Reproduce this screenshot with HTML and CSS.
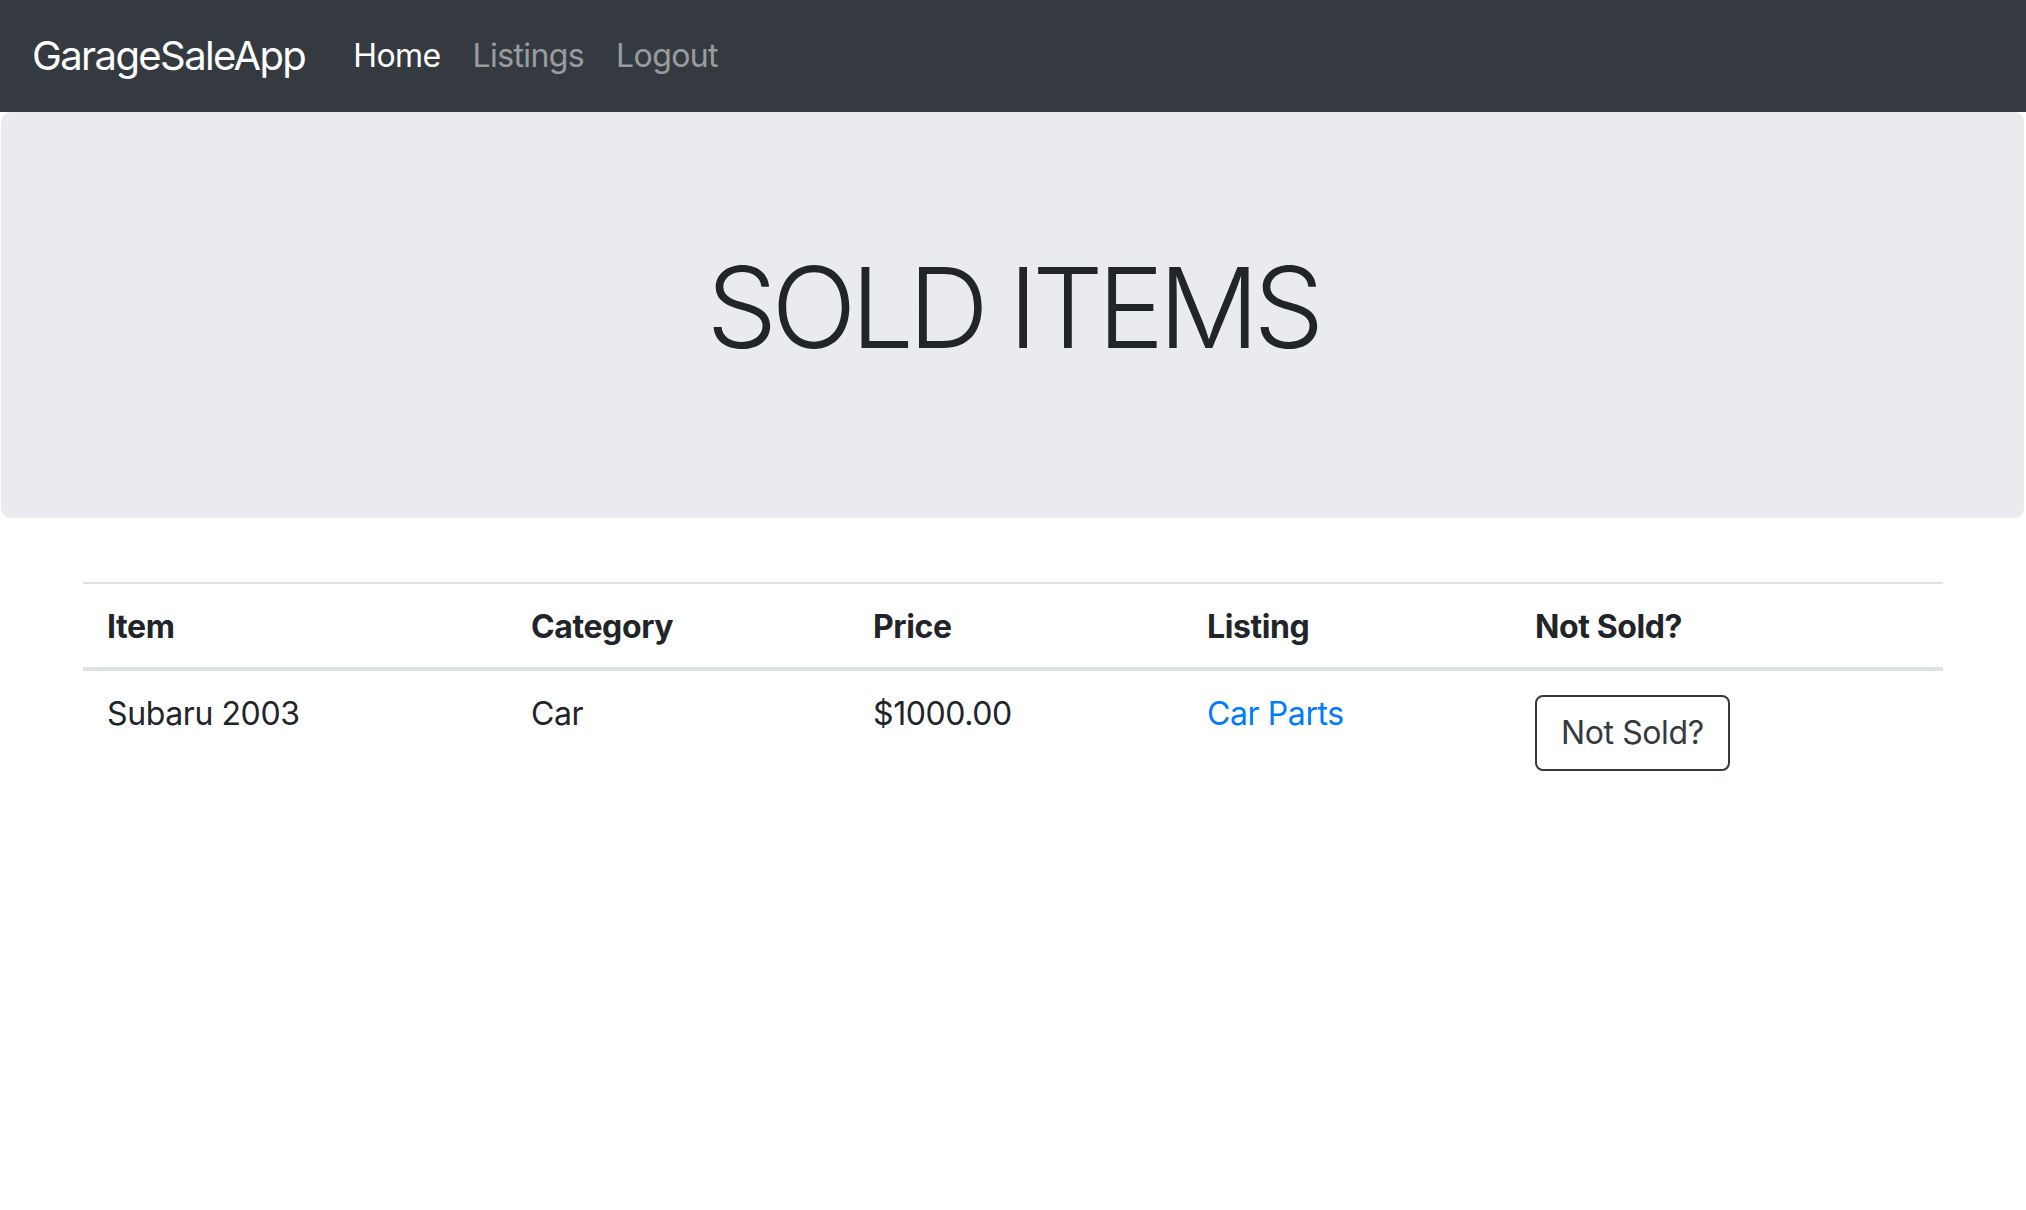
FILE: index.html
```html
<!DOCTYPE html>
<html lang="en">
<head>
<meta charset="utf-8">
<title>GarageSaleApp</title>
<link rel="stylesheet" href="styles.css">
</head>
<body>
<nav class="navbar">
  <a class="brand" href="#">GarageSaleApp</a>
  <ul class="nav">
    <li><a class="nav-link active" href="#">Home</a></li>
    <li><a class="nav-link" href="#">Listings</a></li>
    <li><a class="nav-link" href="#">Logout</a></li>
  </ul>
</nav>
<header class="jumbotron">
  <h1 class="display">SOLD ITEMS</h1>
</header>
<main class="container">
  <table class="table">
    <thead>
      <tr>
        <th class="col-item">Item</th>
        <th class="col-cat">Category</th>
        <th class="col-price">Price</th>
        <th class="col-listing">Listing</th>
        <th class="col-action">Not Sold?</th>
      </tr>
    </thead>
    <tbody>
      <tr>
        <td>Subaru 2003</td>
        <td>Car</td>
        <td>$1000.00</td>
        <td><a class="link" href="#">Car Parts</a></td>
        <td><button class="btn-outline" type="button">Not Sold?</button></td>
      </tr>
    </tbody>
  </table>
</main>
</body>
</html>
```

FILE: styles.css
```css
* { box-sizing: border-box; }
html, body {
  margin: 0;
  padding: 0;
  background: #fff;
}
body {
  font-family: Inter, "Noto Sans", "Liberation Sans", sans-serif;
  font-size: 32px;
  line-height: 37px;
  color: #212529;
}

.navbar {
  display: flex;
  align-items: center;
  height: 112px;
  padding: 16px 32px;
  background: #343a40;
}
.brand {
  font-size: 40px;
  line-height: 60px;
  padding: 10px 0;
  margin-right: 32px;
  color: #fff;
  text-decoration: none;
  letter-spacing: -1.6px;
}
.nav {
  display: flex;
  list-style: none;
  margin: 0;
  padding: 0;
}
.nav-link {
  display: block;
  padding: 16px;
  font-size: 32px;
  line-height: 48px;
  color: rgba(255, 255, 255, 0.5);
  text-decoration: none;
  letter-spacing: -0.6px;
}
.nav-link.active { color: #fff; }

.jumbotron {
  background: #e9ebef;
  border-radius: 10px;
  padding: 128px 64px;
  margin: 0 2px 64px 1px;
  text-align: center;
}
.display {
  margin: 0 0 16px;
  font-size: 112px;
  line-height: 134px;
  font-weight: 300;
  letter-spacing: -5.8px;
  color: #212529;
}

.container {
  max-width: 1920px;
  margin: 0 auto;
  padding: 0 30px;
}
.table {
  width: 100%;
  border-collapse: collapse;
  table-layout: fixed;
}
.table th, .table td {
  text-align: left;
  vertical-align: top;
  padding: 24px 24px 22px;
  letter-spacing: -0.4px;
}
.table th {
  font-weight: 700;
  border-top: 2px solid #dee2e6;
  border-bottom: 4px solid #dee2e6;
}
.table td { padding: 24px; }
.col-item { width: 424px; }
.col-cat { width: 342px; }
.col-price { width: 334px; }
.col-listing { width: 328px; }
.col-action { width: 432px; }

.link {
  color: #007bff;
  text-decoration: none;
}
.btn-outline {
  font-family: inherit;
  font-size: 32px;
  line-height: 48px;
  padding: 12px 24px;
  background: #fff;
  color: #343a40;
  border: 2px solid #343a40;
  border-radius: 8px;
  letter-spacing: -0.4px;
}
```
